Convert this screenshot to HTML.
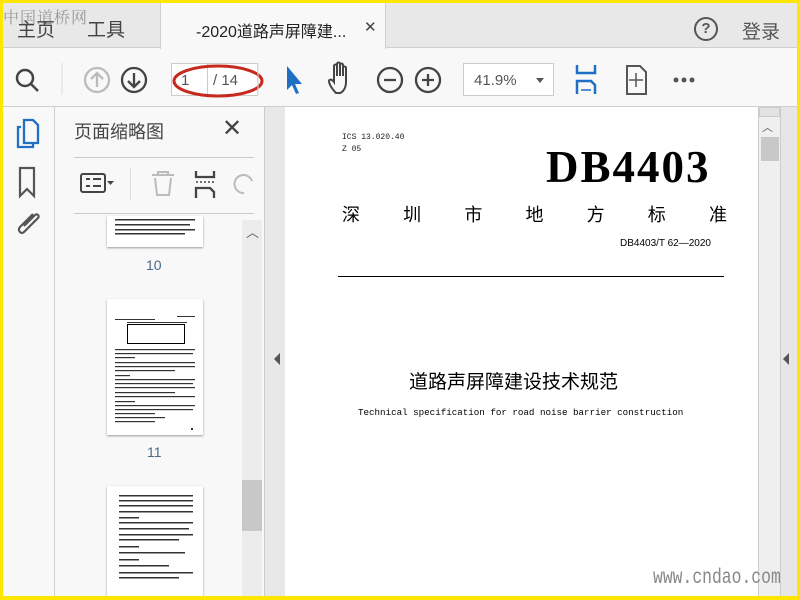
<!DOCTYPE html>
<html><head><meta charset="utf-8"><style>
*{margin:0;padding:0;box-sizing:border-box}
body{width:800px;height:600px;overflow:hidden;background:#ffe600;position:relative;font-family:"Liberation Sans","Noto Sans CJK SC",sans-serif}
.a{position:absolute}
</style></head><body>
<div class="a" style="left:3px;top:3px;width:794px;height:593px;background:#f8f8f8;overflow:hidden">
 <div class="a" style="left:0;top:0;width:794px;height:45px;background:#e8e8e8;border-bottom:1px solid #cfcfcf"></div>
 <div class="a" style="left:157px;top:0;width:226px;height:46px;background:#f8f8f8;border-left:1px solid #cfcfcf;border-right:1px solid #cfcfcf"></div>
 <div class="a" style="left:0;top:2px;font-size:16px;color:#999;letter-spacing:1px;font-family:'Noto Serif CJK SC',serif">中国道桥网</div>
 <div class="a" style="left:14px;top:12px;font-size:19px;color:#444">主页</div>
 <div class="a" style="left:84px;top:12px;font-size:19px;color:#444">工具</div>
 <div class="a" style="left:193px;top:15px;font-size:16px;color:#222">-2020道路声屏障建...</div>
 <div class="a" style="left:361px;top:15px;font-size:15px;color:#444">✕</div>
 <div class="a" style="left:691px;top:14px;width:24px;height:24px;border:2px solid #555;border-radius:50%;text-align:center;font-size:15px;line-height:20px;color:#555;font-weight:bold">?</div>
 <div class="a" style="left:739px;top:14px;font-size:19px;color:#555">登录</div>
 <div class="a" style="left:0;top:103px;width:794px;height:1px;background:#cfcfcf"></div>
 <svg class="a" style="left:0;top:46px" width="794" height="57">
  <g fill="none" stroke="#444" stroke-width="2.5">
   <circle cx="22" cy="29" r="8"/><line x1="28" y1="35" x2="35" y2="42"/>
  </g>
  <line x1="59" y1="14" x2="59" y2="46" stroke="#ddd"/>
  <g fill="none" stroke="#bbb" stroke-width="2.3"><circle cx="94" cy="31" r="12"/><path d="M94 38V24M88 30l6-6 6 6"/></g>
  <g fill="none" stroke="#444" stroke-width="2.3"><circle cx="131" cy="31" r="12"/><path d="M131 24v14M125 32l6 6 6-6"/></g>
  <rect x="168.5" y="14.5" width="36" height="32" fill="#fff" stroke="#ccc"/>
  <rect x="204.5" y="14.5" width="50" height="32" fill="#fff" stroke="#ccc"/>
  <text x="178" y="36" font-size="15" fill="#555" font-family="Liberation Sans">1</text>
  <text x="210" y="36" font-size="15" fill="#555" font-family="Liberation Sans">/ 14</text>
  <ellipse cx="215" cy="32" rx="44" ry="15" fill="none" stroke="#c62a1e" stroke-width="3"/>
  <line x1="255" y1="14" x2="255" y2="46" stroke="#ddd"/>
  <path d="M284 17l0 24 5-5 4 9 3-1-4-9 7 0z" fill="#1f6fc5"/>
  <path d="M333 44c-4-4-7-9-7-12 0-2 3-2 5 1v-16c0-2 3-2 3 0v10-12c0-2 3-2 3 0v12-11c0-2 3-2 3 0v11-8c0-2 3-2 3 0v14c0 6-3 10-6 11z" fill="none" stroke="#444" stroke-width="2"/>
  <g fill="none" stroke="#444" stroke-width="2.3"><circle cx="387" cy="31" r="12"/><path d="M381 31h12"/><circle cx="425" cy="31" r="12"/><path d="M419 31h12M425 25v12"/></g>
  <rect x="460.5" y="14.5" width="90" height="32" fill="#fff" stroke="#ccc"/>
  <text x="471" y="36" font-size="15" fill="#555" font-family="Liberation Sans">41.9%</text>
  <path d="M533 29h8l-4 5z" fill="#555"/>
  <g fill="none" stroke="#1f6fc5" stroke-width="2.5"><path d="M574 16v8h18v-8"/><path d="M574 45v-13h14l4 4v9"/><path d="M578 41h10" stroke-width="1.5"/></g>
  <g fill="none" stroke="#555" stroke-width="2"><path d="M624 17h13l6 6v22h-19z"/><path d="M633 24v14M626 31h14" stroke-width="1.5"/></g>
  <g fill="#555"><circle cx="673" cy="31" r="2.5"/><circle cx="681" cy="31" r="2.5"/><circle cx="689" cy="31" r="2.5"/></g>
 </svg>
 <div class="a" style="left:51px;top:104px;width:1px;height:490px;background:#d0d0d0"></div>
 <svg class="a" style="left:0;top:104px" width="60" height="140">
  <g fill="none" stroke="#1f6fc5" stroke-width="2.3"><path d="M21 13h9l5 5v18h-14z"/><path d="M18 20h-3v20h15v-3"/></g>
  <path d="M17 61v28l7-7 7 7v-28z" fill="none" stroke="#555" stroke-width="2.2"/>
  <path d="M30 107l-13 13c-3 3 1 8 4 5l14-14c2-2-1-5-3-3l-11 11" fill="none" stroke="#555" stroke-width="2.2"/>
 </svg>
 <div class="a" style="left:71px;top:115px;font-size:18px;color:#444">页面缩略图</div>
 <div class="a" style="left:219px;top:111px;font-size:24px;color:#444">✕</div>
 <div class="a" style="left:71px;top:154px;width:180px;height:1px;background:#ccc"></div>
 <div class="a" style="left:71px;top:210px;width:180px;height:1px;background:#ccc"></div>
 <svg class="a" style="left:70px;top:160px" width="190" height="45">
  <rect x="8" y="11" width="24" height="18" rx="2" fill="none" stroke="#444" stroke-width="2"/>
  <path d="M13 16h4M20 16h8M13 23h4M20 23h8" stroke="#444" stroke-width="2"/>
  <path d="M34 18h7l-3.5 4z" fill="#444"/>
  <line x1="57.5" y1="5" x2="57.5" y2="37" stroke="#ddd"/>
  <g fill="none" stroke="#bbb" stroke-width="2"><path d="M79 12h22M85 12v-3h10v3M82 15l2 17h12l2-17"/></g>
  <g fill="none" stroke="#444" stroke-width="2.3"><path d="M123 8v6h18v-6M123 35v-10h14l4 4v6"/><path d="M123 19h18" stroke-dasharray="2 2" stroke-width="1.5"/></g>
  <path d="M171 30a9 9 0 1 1 8-12" fill="none" stroke="#bbb" stroke-width="2"/>
 </svg>
 <div class="a" style="left:104px;top:213px;width:96px;height:31px;background:#fff;box-shadow:0 1px 2px #999"></div>
 <div class="a" style="left:143px;top:254px;font-size:14px;color:#4a6a8a">10</div>
 <div class="a" style="left:104px;top:296px;width:96px;height:136px;background:#fff;box-shadow:0 1px 2px #999"></div>
 <div class="a" style="left:124px;top:321px;width:58px;height:20px;border:1px solid #000"></div>
 <div class="a" style="left:144px;top:441px;font-size:14px;color:#4a6a8a">11</div>
 <div class="a" style="left:104px;top:483px;width:96px;height:120px;background:#fff;box-shadow:0 1px 2px #999"></div>
 <svg class="a" style="left:104px;top:213px" width="96" height="380">
  <g fill="#333">
   <rect x="8" y="3" width="80" height="1.5"/><rect x="8" y="8" width="75" height="1.5"/><rect x="8" y="13" width="80" height="1.5"/><rect x="8" y="17" width="70" height="1.5"/>
   <rect x="70" y="100" width="18" height="1"/><rect x="8" y="103" width="40" height="1"/><rect x="20" y="106" width="60" height="1"/>
   <rect x="8" y="133" width="80" height="1.2"/><rect x="8" y="137" width="78" height="1.2"/><rect x="8" y="141" width="20" height="1.2"/><rect x="8" y="146" width="80" height="1.2"/><rect x="8" y="150" width="80" height="1.2"/><rect x="8" y="154" width="60" height="1.2"/><rect x="8" y="159" width="15" height="1.2"/><rect x="8" y="163" width="80" height="1.2"/><rect x="8" y="167" width="78" height="1.2"/><rect x="8" y="171" width="80" height="1.2"/><rect x="8" y="176" width="60" height="1.2"/><rect x="8" y="180" width="80" height="1.2"/><rect x="8" y="185" width="20" height="1.2"/><rect x="8" y="189" width="80" height="1.2"/><rect x="8" y="193" width="78" height="1.2"/><rect x="8" y="197" width="40" height="1.2"/><rect x="8" y="201" width="50" height="1.2"/><rect x="8" y="205" width="40" height="1.2"/><rect x="84" y="212" width="2" height="2"/>
   <rect x="12" y="279" width="74" height="1.5"/><rect x="12" y="284" width="74" height="1.5"/><rect x="12" y="289" width="74" height="1.5"/><rect x="12" y="295" width="74" height="1.5"/><rect x="12" y="301" width="20" height="1.5"/><rect x="12" y="306" width="74" height="1.5"/><rect x="12" y="312" width="70" height="1.5"/><rect x="12" y="318" width="74" height="1.5"/><rect x="12" y="323" width="60" height="1.5"/><rect x="12" y="330" width="20" height="1.5"/><rect x="12" y="336" width="66" height="1.5"/><rect x="12" y="343" width="20" height="1.5"/><rect x="12" y="349" width="50" height="1.5"/><rect x="12" y="356" width="74" height="1.5"/><rect x="12" y="361" width="60" height="1.5"/>
  </g>
 </svg>
 <div class="a" style="left:239px;top:217px;width:20px;height:377px;background:#ececec"></div>
 <div class="a" style="left:239px;top:477px;width:20px;height:51px;background:#c8c8c8"></div>
 <div class="a" style="left:243px;top:219px;font-size:13px;color:#555">︿</div>
 <div class="a" style="left:261px;top:104px;width:1px;height:490px;background:#ccc"></div>
 <div class="a" style="left:262px;top:104px;width:20px;height:490px;background:#e8e8e8"></div>
 <div class="a" style="left:271px;top:350px;width:0;height:0;border-top:6px solid transparent;border-bottom:6px solid transparent;border-right:6px solid #555"></div>
 <div class="a" style="left:282px;top:104px;width:473px;height:490px;background:#fff"></div>
 <div class="a" style="left:339px;top:130px;font-size:8px;color:#222;font-family:'Liberation Mono',monospace">ICS 13.020.40</div>
 <div class="a" style="left:339px;top:142px;font-size:8px;color:#222;font-family:'Liberation Mono',monospace">Z 05</div>
 <div class="a" style="left:543px;top:138px;font-size:45px;font-weight:bold;color:#000;font-family:'Liberation Serif',serif;letter-spacing:2px">DB4403</div>
 <div class="a" style="left:339px;top:198px;width:385px;display:flex;justify-content:space-between;font-size:18px;color:#000;font-family:'Noto Sans CJK SC',sans-serif"><span>深</span><span>圳</span><span>市</span><span>地</span><span>方</span><span>标</span><span>准</span></div>
 <div class="a" style="left:617px;top:235px;font-size:10px;color:#000">DB4403/T 62—2020</div>
 <div class="a" style="left:335px;top:273px;width:386px;height:1px;background:#000"></div>
 <div class="a" style="left:406px;top:364px;font-size:19px;color:#000;font-family:'Noto Sans CJK SC',sans-serif">道路声屏障建设技术规范</div>
 <div class="a" style="left:355px;top:404px;font-size:9.2px;color:#000;font-family:'Liberation Mono',monospace">Technical specification for road noise barrier construction</div>
 <div class="a" style="left:755px;top:104px;width:1px;height:490px;background:#ccc"></div>
 <div class="a" style="left:756px;top:104px;width:21px;height:490px;background:#efefef"></div>
 <div class="a" style="left:756px;top:104px;width:21px;height:10px;background:#e2e2e2;border:1px solid #ccc"></div>
 <div class="a" style="left:759px;top:116px;font-size:11px;color:#555">︿</div>
 <div class="a" style="left:758px;top:134px;width:18px;height:24px;background:#c8c8c8"></div>
 <div class="a" style="left:777px;top:104px;width:17px;height:490px;background:#e6e6e6;border-left:1px solid #ccc"></div>
 <div class="a" style="left:780px;top:350px;width:0;height:0;border-top:6px solid transparent;border-bottom:6px solid transparent;border-right:6px solid #555"></div>
 <div class="a" style="left:650px;top:564px;font-size:21px;color:#888;font-family:'Liberation Mono',monospace;transform:scaleX(0.78);transform-origin:left;z-index:5;white-space:nowrap">www.cndao.com</div>
</div>
</body></html>
